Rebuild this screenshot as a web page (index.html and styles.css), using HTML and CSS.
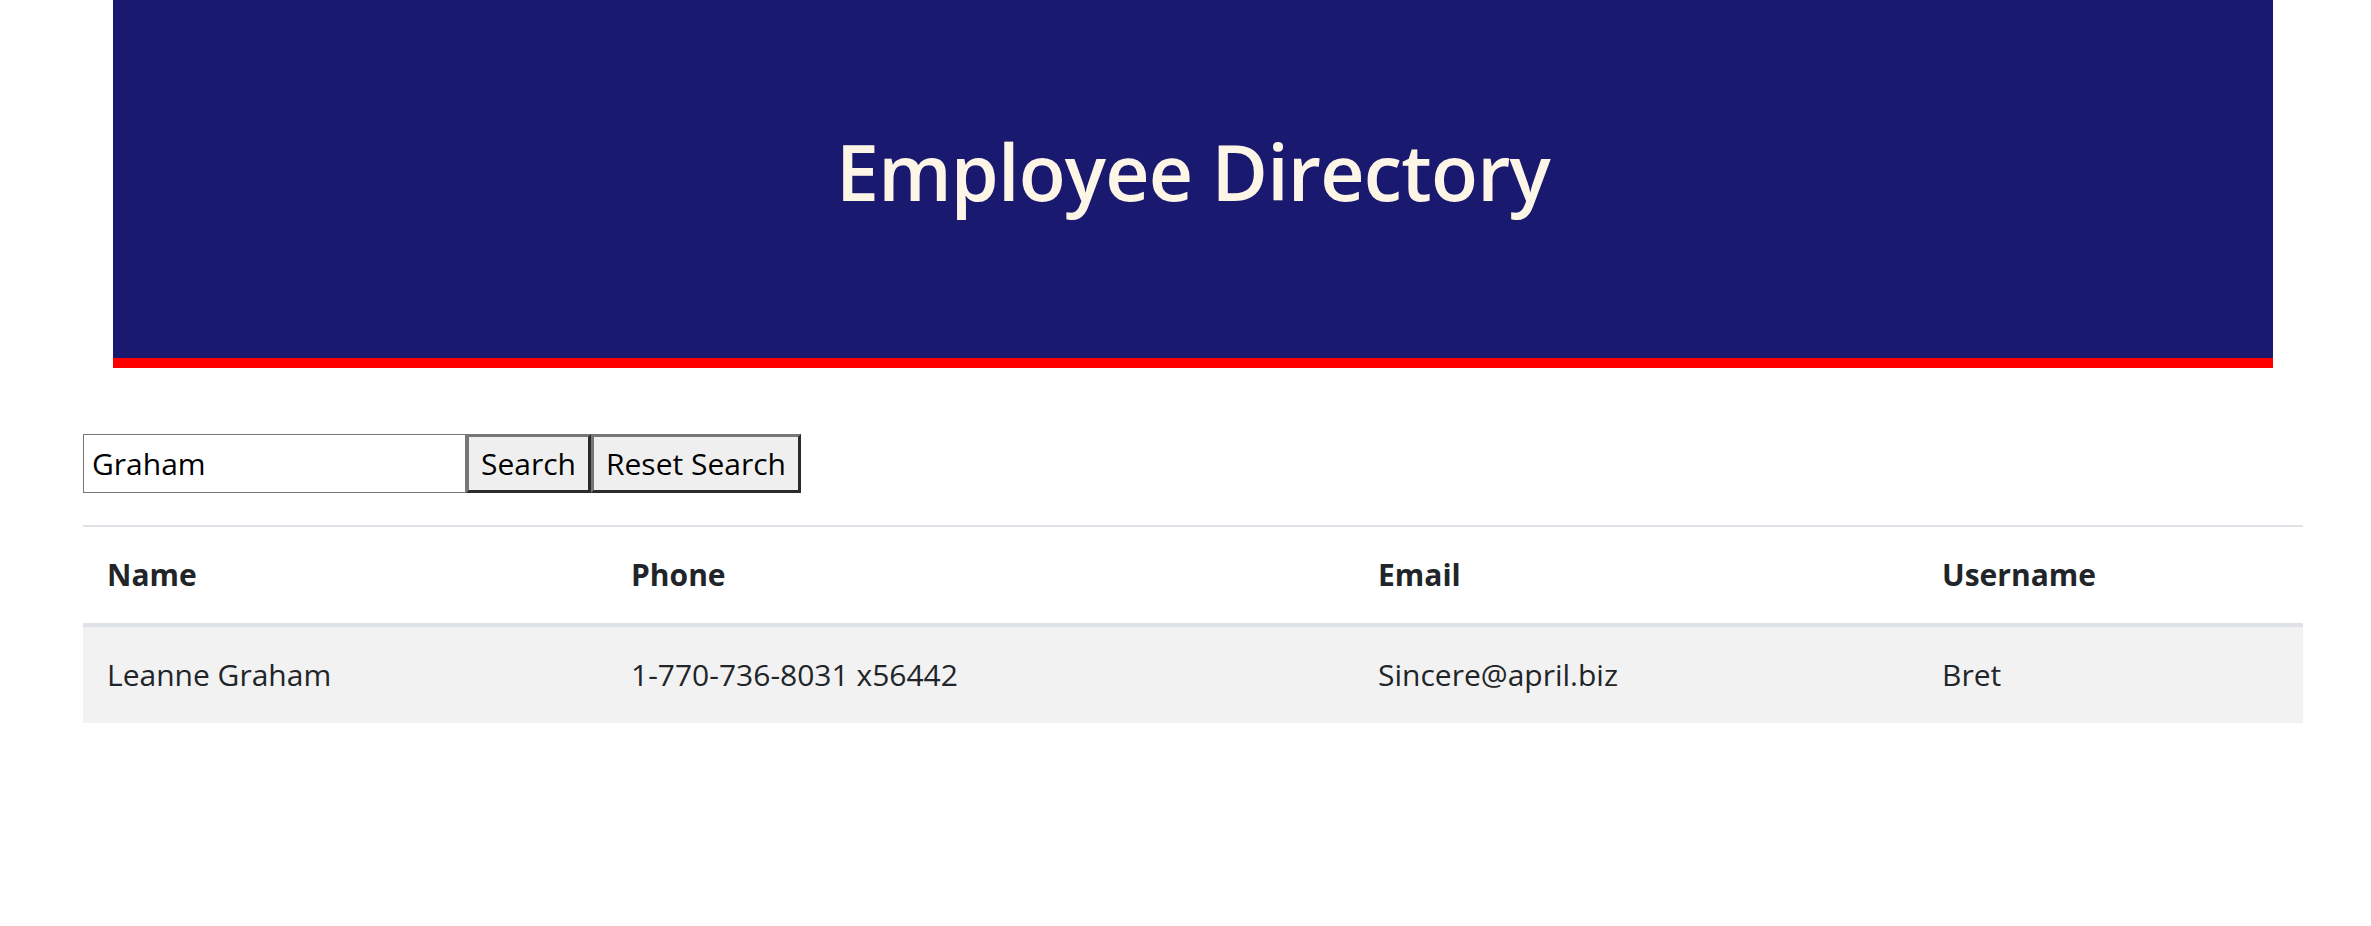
FILE: index.html
```html
<!DOCTYPE html>
<html lang="en">
<head>
<meta charset="utf-8">
<title>Employee Directory</title>
<link rel="stylesheet" href="styles.css">
</head>
<body>
<div class="page">
  <header class="banner">
    <h1 class="banner-title">Employee Directory</h1>
  </header>
  <form class="search">
    <input class="search-input" type="text" value="Graham">
    <button class="btn" type="button">Search</button>
    <button class="btn" type="button">Reset Search</button>
  </form>
  <table class="table">
    <colgroup>
      <col class="c1"><col class="c2"><col class="c3"><col class="c4">
    </colgroup>
    <thead>
      <tr><th>Name</th><th>Phone</th><th>Email</th><th>Username</th></tr>
    </thead>
    <tbody>
      <tr class="striped"><td>Leanne Graham</td><td>1-770-736-8031 x56442</td><td>Sincere@april.biz</td><td>Bret</td></tr>
    </tbody>
  </table>
</div>
</body>
</html>
```

FILE: styles.css
```css
html, body {
  margin: 0;
  padding: 0;
  background: #fff;
}
body {
  font-family: "Open Sans", "Noto Sans", sans-serif;
  font-size: 32px;
  color: #212529;
}
.page {
  width: 2220px;
  margin-left: 83px;
}
.banner {
  margin: 0 30px;
  height: 358px;
  background: #191970;
  border-bottom: 10px solid #ff0000;
  display: flex;
  align-items: center;
  justify-content: center;
}
.banner-title {
  margin: 0 0 16px 0;
  font-size: 77px;
  font-weight: 600;
  color: #fdf5e6;
  letter-spacing: -0.8px;
}
.search {
  display: flex;
  align-items: stretch;
  margin-top: 66px;
  height: 59px;
}
.search-input {
  box-sizing: border-box;
  width: 383px;
  height: 59px;
  border: 1px solid #767676;
  padding: 0 8px;
  font-family: inherit;
  font-size: 30px;
  color: #000;
  outline: none;
}
.btn {
  box-sizing: border-box;
  height: 59px;
  padding: 0 12px;
  background: #efefef;
  border-style: solid;
  border-width: 3px;
  border-color: #767676 #2b2b2b #2b2b2b #767676;
  font-family: inherit;
  font-size: 30px;
  color: #000;
}
.table {
  margin-top: 32px;
  width: 2220px;
  border-collapse: collapse;
  table-layout: fixed;
}
.c1 { width: 524px; }
.c2 { width: 747px; }
.c3 { width: 564px; }
.c4 { width: 385px; }
.table th, .table td {
  text-align: left;
  padding: 24px 24px;
  line-height: 48px;
  font-size: 30px;
}
.table th {
  font-weight: 700;
  border-top: 2px solid #dee2e6;
  border-bottom: 4px solid #dee2e6;
}
.striped {
  background: #f2f2f2;
}
```
